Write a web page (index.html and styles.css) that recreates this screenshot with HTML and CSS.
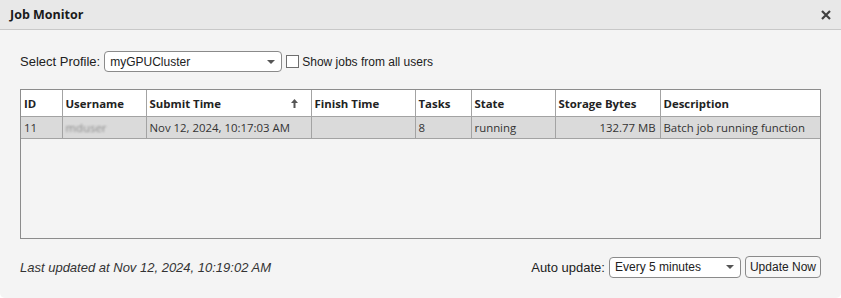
FILE: index.html
```html
<!DOCTYPE html>
<html lang="en">
<head>
  <meta charset="UTF-8" />
  <title>Job Monitor</title>
  <link rel="stylesheet" href="styles.css">
</head>
<body>
  <div class="window">
    <div class="titlebar">
      <span class="title">Job Monitor</span>
      <svg class="close" width="10" height="10" viewBox="0 0 10 10"><path d="M1 1 L9 9 M9 1 L1 9" stroke="#404040" stroke-width="2.2"/></svg>
    </div>
    <div class="content">
      <div class="toolbar">
        <span class="label">Select Profile:</span>
        <div class="dropdown profile">
          <span>myGPUCluster</span>
          <svg width="8" height="4" viewBox="0 0 8 4"><path d="M0 0 H8 L4 4 Z" fill="#555"/></svg>
        </div>
        <span class="checkbox"></span>
        <span class="check-label">Show jobs from all users</span>
      </div>

      <div class="table-box">
        <table class="jobs">
          <colgroup>
            <col style="width:41px"><col style="width:84px"><col style="width:165px"><col style="width:104px">
            <col style="width:56px"><col style="width:84px"><col style="width:105px"><col>
          </colgroup>
          <thead>
            <tr>
              <th>ID</th>
              <th>Username</th>
              <th class="sorted">Submit Time
                <svg class="sort" width="7" height="9" viewBox="0 0 7 9"><path d="M3.5 0 L7 4 H4.5 V9 H2.5 V4 H0 Z" fill="#555"/></svg>
              </th>
              <th>Finish Time</th>
              <th>Tasks</th>
              <th>State</th>
              <th>Storage Bytes</th>
              <th>Description</th>
            </tr>
          </thead>
          <tbody>
            <tr>
              <td>11</td>
              <td><span class="blur">mduser</span></td>
              <td>Nov 12, 2024, 10:17:03 AM</td>
              <td></td>
              <td>8</td>
              <td>running</td>
              <td class="num">132.77 MB</td>
              <td>Batch job running function</td>
            </tr>
          </tbody>
        </table>
      </div>

      <div class="footer">
        <span class="updated">Last updated at Nov 12, 2024, 10:19:02 AM</span>
        <div class="controls">
          <span class="label">Auto update:</span>
          <div class="dropdown interval">
            <span>Every 5 minutes</span>
            <svg width="8" height="4" viewBox="0 0 8 4"><path d="M0 0 H8 L4 4 Z" fill="#555"/></svg>
          </div>
          <button class="btn">Update Now</button>
        </div>
      </div>
    </div>
  </div>
</body>
</html>
```

FILE: styles.css
```css
html, body { margin: 0; padding: 0; background: #ffffff; }
body { font-family: "Liberation Sans", Arial, sans-serif; font-size: 12px; color: #212121; }

.window { width: 841px; height: 298px; background: #f4f4f4; border-radius: 0 0 5px 5px; overflow: hidden; }

.titlebar { height: 30px; background: #e8e8e8; border-bottom: 1px solid #c8c8c8; box-sizing: border-box; display: flex; align-items: center; justify-content: space-between; padding: 0 10px 0 10px; }
.title { font-family: "Open Sans", "Liberation Sans", sans-serif; font-weight: bold; font-size: 12.5px; color: #1a1a1a; }
.close { display: block; }

.content { padding: 21px 20px 0 20px; }

.toolbar { display: flex; align-items: center; height: 21px; }
.label { white-space: nowrap; font-size: 13px; }
.check-label { white-space: nowrap; }

.dropdown { height: 21px; box-sizing: border-box; border: 1px solid #8a8a8a; border-radius: 4px; background: #fff; display: flex; align-items: center; justify-content: space-between; padding: 0 6px 0 5px; }
.dropdown svg { display: block; }
.profile { width: 178px; margin-left: 4px; }
.checkbox { width: 13px; height: 13px; box-sizing: border-box; border: 1px solid #6e6e6e; background: #fff; margin: 0 3px 0 4px; }

.table-box { margin-top: 17px; height: 150px; box-sizing: border-box; border: 1px solid #8c8c8c; background: #f4f4f4; }
.jobs { width: 100%; table-layout: fixed; border-collapse: collapse; font-family: "Open Sans", "Noto Sans", sans-serif; font-size: 11.4px; }
.jobs th { height: 26px; text-align: left; font-weight: bold; padding: 0 3px; border-left: 1px solid #a3a3a3; border-bottom: 1px solid #a3a3a3; background: #fff; white-space: nowrap; color: #222; }
.jobs th:first-child, .jobs td:first-child { border-left: none; }
.jobs th.sorted { position: relative; }
.sort { position: absolute; right: 13px; top: 9px; }
.jobs td { height: 21px; padding: 0 3px; background: #dadada; border-left: 1px solid #a3a3a3; border-bottom: 1px solid #a3a3a3; white-space: nowrap; overflow: hidden; color: #333; }
.jobs td.num { text-align: right; padding-right: 4px; }
.blur { color: #8a8a8a; filter: blur(1.2px); }

.footer { display: flex; align-items: center; justify-content: space-between; margin-top: 17px; height: 22px; }
.updated { font-style: italic; font-size: 13px; color: #333; }
.controls { display: flex; align-items: center; }
.interval { width: 132px; margin-left: 4px; }
.btn { height: 22px; margin-left: 4px; padding: 0 4px; font: inherit; color: #212121; background: #f7f7f7; border: 1px solid #8a8a8a; border-radius: 4px; }
```
